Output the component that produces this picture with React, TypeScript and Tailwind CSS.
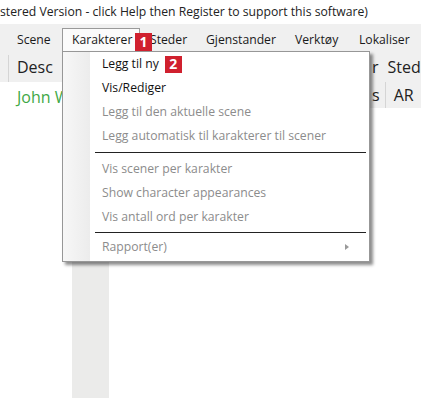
import React from "react";

// widths taken from the reference so labels land where they do there
const menu = [
  { label: "Scene", w: "w-[55px]" },
  { label: "Karakterer", w: "w-[78px]" },
  { label: "Steder", w: "w-[56px]" },
  { label: "Gjenstander", w: "w-[89px]" },
  { label: "Verktøy", w: "w-[64px]" },
  { label: "Lokaliser", w: "w-[70px]" },
];

type Item = { label: string; enabled?: boolean; sub?: boolean; badge?: string };

const group1: Item[] = [
  { label: "Legg til ny", enabled: true, badge: "2" },
  { label: "Vis/Rediger", enabled: true },
  { label: "Legg til den aktuelle scene" },
  { label: "Legg automatisk til karakterer til scener" },
];
const group2: Item[] = [
  { label: "Vis scener per karakter" },
  { label: "Show character appearances" },
  { label: "Vis antall ord per karakter" },
];

function Badge({ n, className }: { n: string; className?: string }) {
  return (
    <span className={`flex items-center justify-center bg-[#d0202e] text-white font-bold text-[14px] leading-none ${className ?? ""}`}>
      {n}
    </span>
  );
}

function MenuRow({ item }: { item: Item }) {
  return (
    <div className={`h-6 flex items-center pl-[39px] pr-3 ${item.enabled ? "text-[#111]" : "text-[#8c8c8c]"}`}>
      <span>{item.label}</span>
      {item.badge && <Badge n={item.badge} className="ml-[6px] w-[17px] h-[17px]" />}
      {item.sub && (
        <span className="ml-auto mr-[8px] w-0 h-0 border-y-[3.5px] border-y-transparent border-l-[4px] border-l-[#9a9a9a]" />
      )}
    </div>
  );
}

export default function App() {
  return (
    <div
      className="relative w-[421px] h-[398px] bg-white overflow-hidden flex flex-col text-[12.2px] text-[#1a1a1a]"
      style={{ fontFamily: '"Open Sans", "Noto Sans", sans-serif' }}
    >
      {/* title */}
      <div className="h-6 flex items-center whitespace-nowrap text-[#222]">
        stered Version - click Help then Register to support this software)
      </div>

      {/* menu bar */}
      <div className="h-7 bg-[#f0f0f0] flex items-end pl-[7px] whitespace-nowrap">
        {menu.map((m) =>
          m.label === "Karakterer" ? (
            <div key={m.label} className={`${m.w} shrink-0 h-6 pl-[9px] flex items-center bg-[#fbfbfb] border border-b-0 border-[#9a9a9a]`}>
              {m.label}
            </div>
          ) : (
            <div key={m.label} className={`${m.w} shrink-0 h-6 pl-[10px] flex items-center`}>
              {m.label}
            </div>
          )
        )}
      </div>

      {/* content */}
      <div className="flex-1 flex text-[16px]">
        <div className="flex-1 flex flex-col">
          <div className="h-[30px] bg-[#f0f0f0] flex items-center">
            <div className="ml-[8px] w-px h-[27px] self-end bg-[#d5d5d5]" />
            <span className="ml-[8px] text-[#222]">Desc</span>
          </div>
          <div className="h-[30px] flex items-center pl-[17px] text-[#3fa846]">John Wayne</div>
          <div className="flex-1 pl-[72px] flex">
            <div className="w-[37px] bg-[#ebebea]" />
          </div>
        </div>
        <div className="w-[56px] flex flex-col overflow-hidden">
          <div className="h-[56px] bg-[#f0f0f0] flex flex-col">
            <div className="h-[30px] flex items-center pl-[7px] gap-[9px] text-[#222] whitespace-nowrap">
              <span>r</span>
              <span>Steder</span>
            </div>
            <div className="h-[26px] flex items-center pl-[7px] text-[#222]">
              <span>s</span>
              <div className="ml-[5px] w-px h-full bg-[#d5d5d5]" />
              <span className="ml-[8px]">AR</span>
            </div>
          </div>
        </div>
      </div>

      {/* dropdown */}
      <div className="absolute left-[62px] top-[51px] w-[308px] h-[211px] bg-white border border-[#979797] shadow-[3px_3px_3px_rgba(0,0,0,0.45)]">
        <div className="absolute left-0 top-0 bottom-0 w-[27px] bg-gradient-to-r from-[#f7f7f7] to-[#ececec]" />
        <div className="relative flex flex-col whitespace-nowrap">
          {group1.map((it) => (
            <MenuRow key={it.label} item={it} />
          ))}
          <div className="h-[9px] flex items-center pl-[32px] pr-[3px]">
            <div className="w-full border-t border-[#222]" />
          </div>
          {group2.map((it) => (
            <MenuRow key={it.label} item={it} />
          ))}
          <div className="h-[6px] flex items-center pl-[32px] pr-[3px]">
            <div className="w-full border-t border-[#222]" />
          </div>
          <MenuRow item={{ label: "Rapport(er)", sub: true }} />
        </div>
      </div>

      <Badge n="1" className="absolute left-[135px] top-[33px] w-[17px] h-[18px]" />
    </div>
  );
}
